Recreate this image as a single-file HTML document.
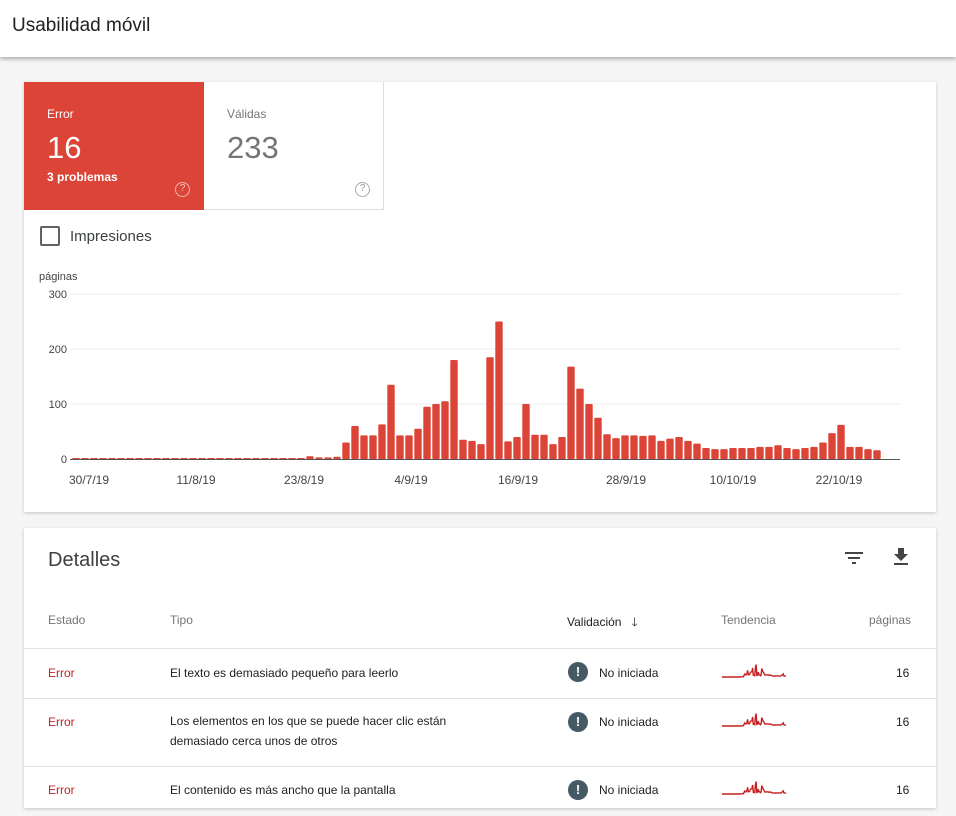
<!DOCTYPE html>
<html><head><meta charset="utf-8"><style>
*{box-sizing:border-box;margin:0;padding:0}
body{width:956px;height:798px;overflow:hidden;background:#f5f5f5;font-family:"Liberation Sans",Arial,sans-serif;color:#202124;position:relative}
.hdr{position:absolute;left:0;top:0;width:956px;height:57px;background:#fff;box-shadow:0 2px 4px rgba(0,0,0,.3)}
.hdr span{position:absolute;left:12px;top:15px;font-size:19px;color:#212121}
.card{position:absolute;left:24px;width:912px;background:#fff;box-shadow:0 1px 3px rgba(0,0,0,.2)}
.t{position:absolute;font-size:12px}
.row{position:absolute;left:0;width:912px;border-top:1px solid #e0e0e0}
.cell{position:absolute;font-size:12px}
.ic{position:absolute;width:20px;height:20px;border-radius:50%;background:#455a64;color:#fff;font-weight:bold;font-size:13px;text-align:center;line-height:20px}
</style></head><body>
<div class="hdr"><span>Usabilidad móvil</span></div>
<div class="card" style="top:82px;height:430px">
 <div style="position:absolute;left:0;top:0;width:180px;height:128px;background:#db4437;color:#fff">
  <div class="t" style="left:23px;top:25px">Error</div>
  <div style="position:absolute;left:23px;top:48px;font-size:31px">16</div>
  <div class="t" style="left:23px;top:88px;font-weight:bold">3 problemas</div>
  <div style="position:absolute;left:151px;top:100px;width:15px;height:15px;border:1.5px solid rgba(255,255,255,.6);border-radius:50%;font-size:10px;text-align:center;line-height:12px;color:rgba(255,255,255,.7)">?</div>
 </div>
 <div style="position:absolute;left:180px;top:0;width:180px;height:128px;border-right:1px solid #ddd;border-bottom:1px solid #ddd;color:#757575">
  <div class="t" style="left:23px;top:25px">Válidas</div>
  <div style="position:absolute;left:23px;top:48px;font-size:31px">233</div>
  <div style="position:absolute;left:151px;top:100px;width:15px;height:15px;border:1.5px solid #aaa;border-radius:50%;font-size:10px;text-align:center;line-height:12px;color:#999">?</div>
 </div>
 <div style="position:absolute;left:16px;top:144px;width:20px;height:20px;border:2px solid #5f6368;border-radius:2px"></div>
 <div style="position:absolute;left:46px;top:146px;font-size:15px;color:#3c4043">Impresiones</div>
 <svg width="912" height="430" style="position:absolute;left:0;top:0" id="ch">
  <text x="15" y="198" font-size="11" fill="#444" font-family="Liberation Sans">páginas</text>
  <g font-size="11" fill="#444" font-family="Liberation Sans" text-anchor="end">
   <text x="43" y="216">300</text><text x="43" y="271">200</text><text x="43" y="326">100</text><text x="43" y="381">0</text>
  </g>
  <g stroke="#ececec"><line x1="46" x2="876" y1="212" y2="212"/><line x1="46" x2="876" y1="267" y2="267"/><line x1="46" x2="876" y1="322" y2="322"/></g>
  <g id="bars" fill="#db4437"></g>
  <line x1="46" x2="876" y1="377.5" y2="377.5" stroke="#555"/>
  <g font-size="12" fill="#444" font-family="Liberation Sans" text-anchor="middle">
   <text x="65" y="402">30/7/19</text><text x="172" y="402">11/8/19</text><text x="280" y="402">23/8/19</text><text x="387" y="402">4/9/19</text><text x="494" y="402">16/9/19</text><text x="602" y="402">28/9/19</text><text x="709" y="402">10/10/19</text><text x="815" y="402">22/10/19</text>
  </g>
 </svg>
</div>
<div class="card" style="top:528px;height:280px">
 <div style="position:absolute;left:24px;top:21px;font-size:20px;color:#3c4043">Detalles</div>
 <svg style="position:absolute;left:818px;top:18px" width="24" height="24" viewBox="0 0 24 24"><path d="M3 6h18v2H3zM6 11h12v2H6zM10 16h4v2h-4z" fill="#444"/></svg>
 <svg style="position:absolute;left:865px;top:17px" width="24" height="24" viewBox="0 0 24 24"><path d="M19 9h-4V3H9v6H5l7 7 7-7zM5 18v2h14v-2z" fill="#444"/></svg>
 <div class="cell" style="left:24px;top:85px;color:#757575">Estado</div>
 <div class="cell" style="left:146px;top:85px;color:#757575">Tipo</div>
 <div class="cell" style="left:543px;top:85px;color:#202124">Validación &nbsp;&nbsp;🡓</div>
 <div class="cell" style="left:697px;top:85px;color:#757575">Tendencia</div>
 <div class="cell" style="left:845px;top:85px;color:#757575">páginas</div>
 <div class="row" style="top:120px;height:50px">
  <div class="cell" style="left:24px;top:17px;color:#c5221f">Error</div>
  <div class="cell" style="left:146px;top:17px">El texto es demasiado pequeño para leerlo</div>
  <div class="ic" style="left:544px;top:13px">!</div>
  <div class="cell" style="left:575px;top:17px">No iniciada</div>
  <svg class="sp" style="position:absolute;left:697px;top:12px" width="66" height="20"></svg>
  <div class="cell" style="left:872px;top:17px">16</div>
 </div>
 <div class="row" style="top:170px;height:68px">
  <div class="cell" style="left:24px;top:16px;color:#c5221f">Error</div>
  <div class="cell" style="left:146px;top:12px;line-height:20px">Los elementos en los que se puede hacer clic están<br>demasiado cerca unos de otros</div>
  <div class="ic" style="left:544px;top:13px">!</div>
  <div class="cell" style="left:575px;top:16px">No iniciada</div>
  <svg class="sp" style="position:absolute;left:697px;top:11px" width="66" height="20"></svg>
  <div class="cell" style="left:872px;top:16px">16</div>
 </div>
 <div class="row" style="top:238px;height:50px">
  <div class="cell" style="left:24px;top:16px;color:#c5221f">Error</div>
  <div class="cell" style="left:146px;top:16px">El contenido es más ancho que la pantalla</div>
  <div class="ic" style="left:544px;top:13px">!</div>
  <div class="cell" style="left:575px;top:16px">No iniciada</div>
  <svg class="sp" style="position:absolute;left:697px;top:11px" width="66" height="20"></svg>
  <div class="cell" style="left:872px;top:16px">16</div>
 </div>
</div>
<script>
var v=[5,3,3,4,30,60,43,43,63,135,43,43,55,95,100,105,180,35,33,27,185,250,32,40,100,44,44,27,40,168,128,100,75,45,38,43,43,42,43,33,37,40,33,28,20,18,18,20,20,20,22,22,25,20,18,20,22,30,47,62,22,22,18,16];
var g=document.getElementById('bars'),s='';
var p=9.0,start=286;
for(var x=start-p;x>46;x-=p){s+='<rect x="'+(x-3.7).toFixed(1)+'" y="376" width="7.4" height="1.5"/>';}
for(var i=0;i<v.length;i++){var h=v[i]*0.55,x=start+i*p;s+='<rect x="'+(x-3.7).toFixed(1)+'" y="'+(377-h).toFixed(1)+'" width="7.4" height="'+h.toFixed(1)+'" rx="1"/>';}
g.innerHTML=s;
var all=[];for(var k=0;k<27;k++)all.push(0);all=all.concat(v);
var d='';for(var i=0;i<all.length;i++){d+=(i?'L':'M')+(i*64/(all.length-1)+1).toFixed(1)+' '+(16-all[i]*0.05).toFixed(1);}
document.querySelectorAll('.sp').forEach(function(e){e.innerHTML='<path d="'+d+'" fill="none" stroke="#c5221f" stroke-width="1.4"/>';});
</script>
</body></html>
